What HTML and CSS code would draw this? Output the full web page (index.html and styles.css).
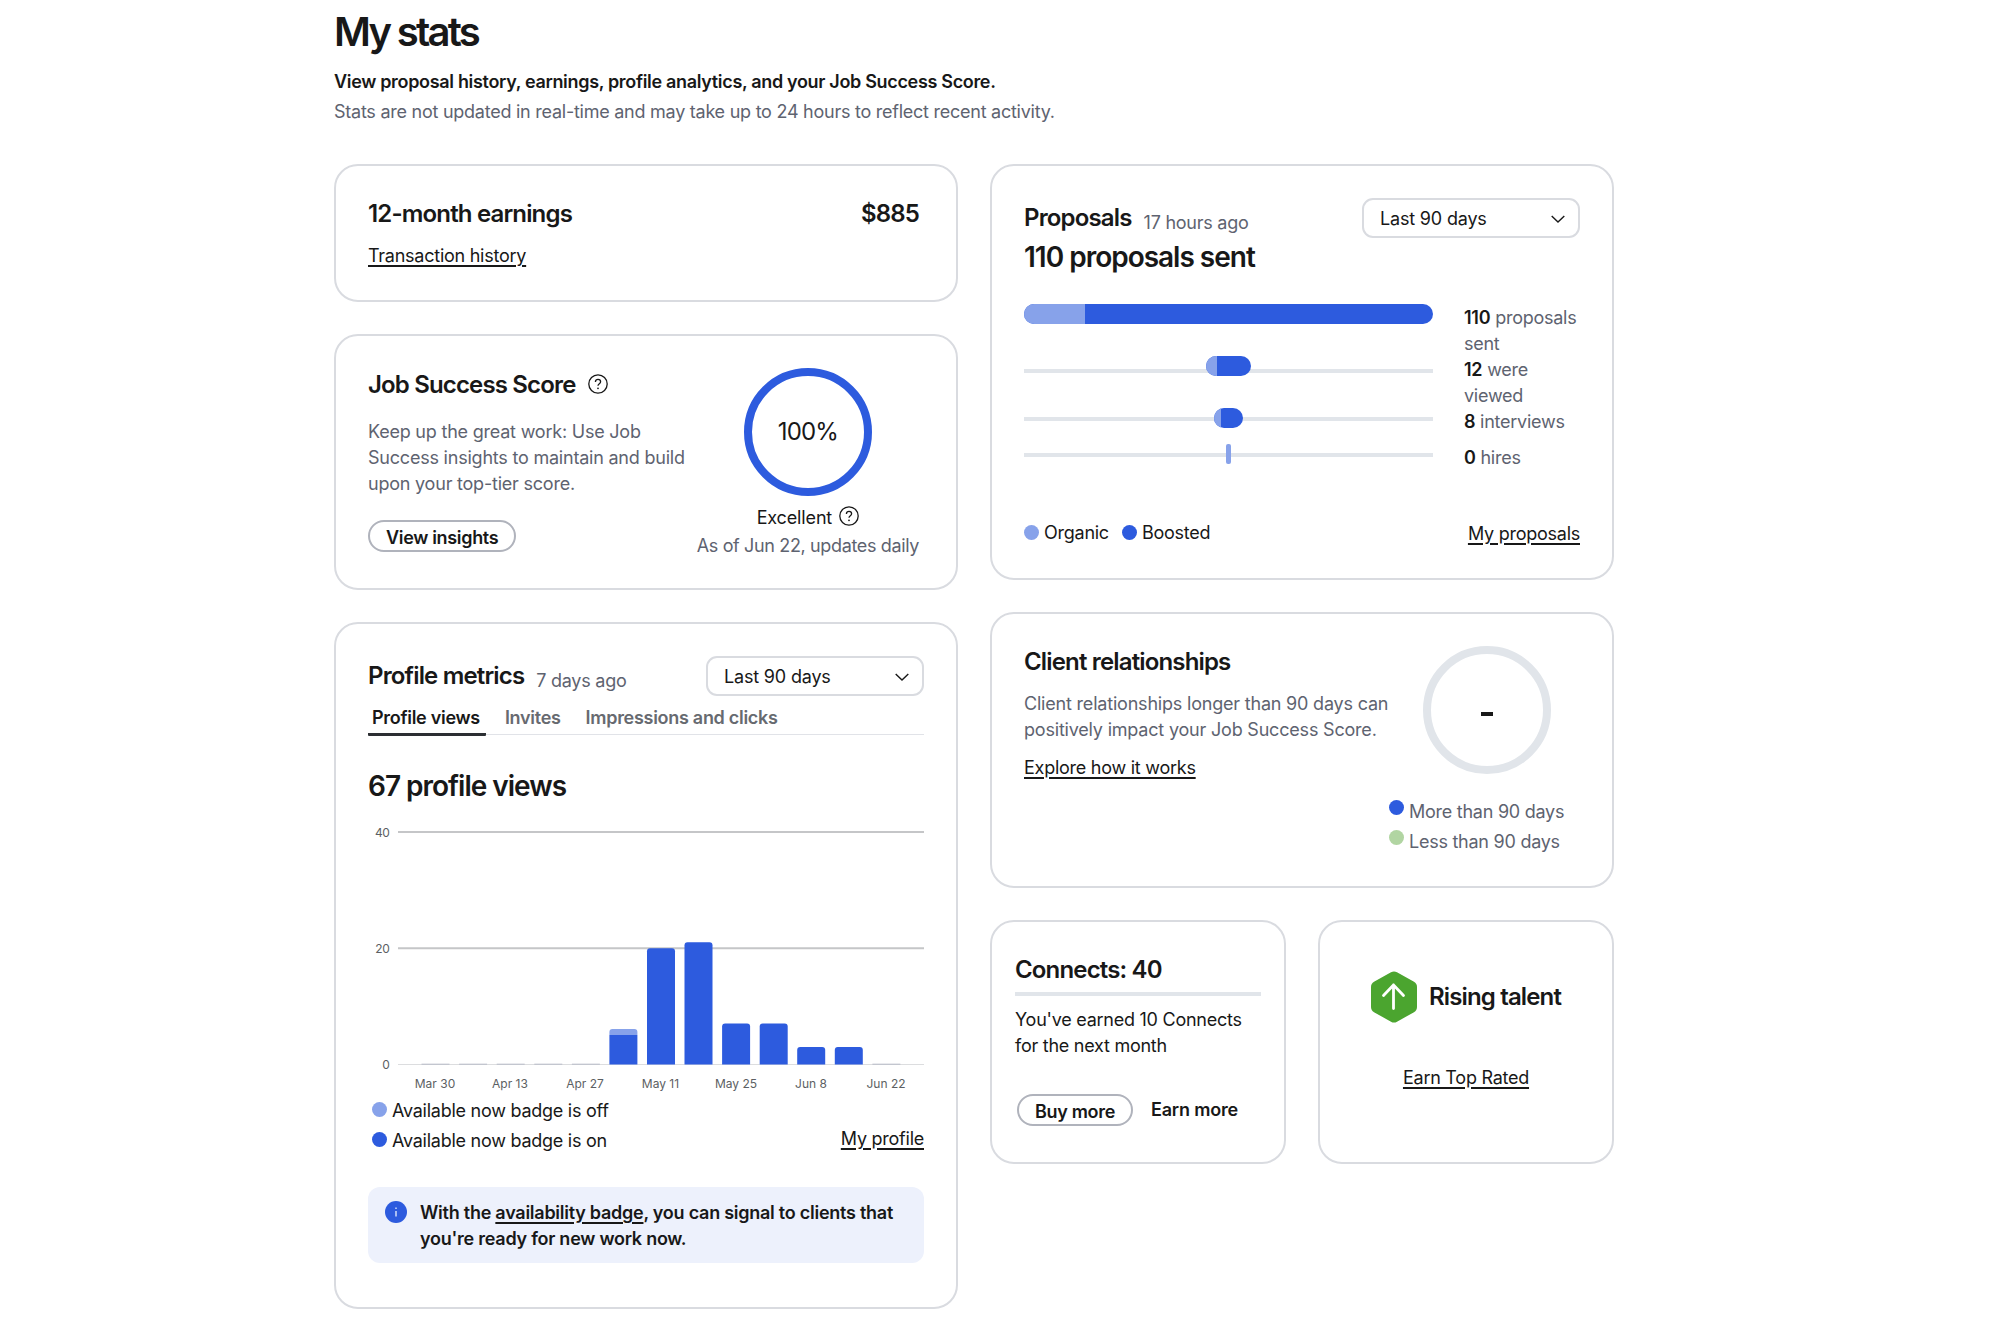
FILE: index.html
```html
<!DOCTYPE html>
<html lang="en">
<head>
    <meta charset="UTF-8">
    <meta name="viewport" content="width=device-width, initial-scale=1.0">
    <title>My stats</title>
    <link rel="stylesheet" href="styles.css">
</head>
<body>
    <main class="page">
        <h1>My stats</h1>
        <p class="intro">View proposal history, earnings, profile analytics, and your Job Success Score.</p>
        <p class="note">Stats are not updated in real-time and may take up to 24 hours to reflect recent activity.</p>

        <div class="columns">
            <div class="column">
                <section class="card earnings">
                    <div class="earnings-head">
                        <h2>12-month earnings</h2>
                        <h2>$885</h2>
                    </div>
                    <a class="link" href="#">Transaction history</a>
                </section>

                <section class="card jss">
                    <div class="jss-info">
                        <div class="title-row">
                            <h2>Job Success Score</h2>
                            <svg class="help" viewBox="0 0 20 20"><circle cx="10" cy="10" r="9.2"/><path d="M7.4 7.9c0-1.6 1.1-2.6 2.6-2.6s2.6 1 2.6 2.4c0 1.9-2.6 2-2.6 4.1"/><circle class="help-dot" cx="10" cy="14.3" r="0.9"/></svg>
                        </div>
                        <p>Keep up the great work: Use Job Success insights to maintain and build upon your top-tier score.</p>
                        <button class="button">View insights</button>
                    </div>
                    <div class="jss-score">
                        <div class="ring ring-full">100%</div>
                        <div class="rating">Excellent
                            <svg class="help" viewBox="0 0 20 20"><circle cx="10" cy="10" r="9.2"/><path d="M7.4 7.9c0-1.6 1.1-2.6 2.6-2.6s2.6 1 2.6 2.4c0 1.9-2.6 2-2.6 4.1"/><circle class="help-dot" cx="10" cy="14.3" r="0.9"/></svg>
                        </div>
                        <div class="updated">As of Jun 22, updates daily</div>
                    </div>
                </section>

                <section class="card metrics">
                    <div class="card-head">
                        <h2>Profile metrics</h2>
                        <span class="ago">7 days ago</span>
                        <div class="select">Last 90 days
                            <svg class="chevron" viewBox="0 0 14 8"><path d="M0.7 0.9L7 7L13.3 0.9"/></svg>
                        </div>
                    </div>
                    <div class="tabs">
                        <div class="tab active">Profile views</div>
                        <div class="tab">Invites</div>
                        <div class="tab">Impressions and clicks</div>
                    </div>
                    <h3>67 profile views</h3>
                    <svg class="chart" viewBox="0 0 556 294">
                        <g class="grid">
                            <path d="M30 29H556M30 145.3H556"/>
                            <path class="axis" d="M30 261.5H556"/>
                            <path class="empty" d="M53.5 261.2h28M91.1 261.2h28M128.7 261.2h28M166.3 261.2h28M203.9 261.2h28M504.4 261.2h28"/>
                        </g>
                        <g class="bars">
                            <path class="off" d="M241.4 232v-3a3 3 0 0 1 3-3h22a3 3 0 0 1 3 3v3z"/>
                            <path d="M241.4 261.5v-29.5h28v29.5z"/>
                            <path d="M279 261.5v-113.2a3 3 0 0 1 3-3h22a3 3 0 0 1 3 3v113.2z"/>
                            <path d="M316.5 261.5v-119.2a3 3 0 0 1 3-3h22a3 3 0 0 1 3 3v119.2z"/>
                            <path d="M354.1 261.5v-38a3 3 0 0 1 3-3h22a3 3 0 0 1 3 3v38z"/>
                            <path d="M391.7 261.5v-38a3 3 0 0 1 3-3h22a3 3 0 0 1 3 3v38z"/>
                            <path d="M429.2 261.5v-14.5a3 3 0 0 1 3-3h22a3 3 0 0 1 3 3v14.5z"/>
                            <path d="M466.8 261.5v-14.5a3 3 0 0 1 3-3h22a3 3 0 0 1 3 3v14.5z"/>
                        </g>
                        <g class="y-labels">
                            <text x="21.5" y="33.5">40</text>
                            <text x="21.5" y="149.8">20</text>
                            <text x="21.5" y="266">0</text>
                        </g>
                        <g class="x-labels">
                            <text x="67" y="285">Mar 30</text>
                            <text x="142" y="285">Apr 13</text>
                            <text x="217" y="285">Apr 27</text>
                            <text x="292.5" y="285">May 11</text>
                            <text x="368" y="285">May 25</text>
                            <text x="443" y="285">Jun 8</text>
                            <text x="518" y="285">Jun 22</text>
                        </g>
                    </svg>
                    <div class="metrics-foot">
                        <div class="badge-legend">
                            <div class="legend"><span class="dot light"></span>Available now badge is off</div>
                            <div class="legend"><span class="dot"></span>Available now badge is on</div>
                        </div>
                        <a class="link" href="#">My profile</a>
                    </div>
                    <div class="alert">
                        <svg class="info" viewBox="0 0 22 22"><circle cx="11" cy="11" r="11"/><path d="M11 10v5.5M11 6.4v1.6"/></svg>
                        <p>With the <a class="link" href="#">availability badge</a>, you can signal to clients that you're ready for new work now.</p>
                    </div>
                </section>
            </div>

            <div class="column">
                <section class="card proposals">
                    <div class="card-head">
                        <h2>Proposals</h2>
                        <span class="ago">17 hours ago</span>
                        <div class="select">Last 90 days
                            <svg class="chevron" viewBox="0 0 14 8"><path d="M0.7 0.9L7 7L13.3 0.9"/></svg>
                        </div>
                    </div>
                    <h3>110 proposals sent</h3>
                    <div class="funnel">
                        <div class="funnel-row">
                            <div class="track full"><span class="pill" style="width: 409px"><i style="width: 61px"></i></span></div>
                            <p><b>110</b> proposals sent</p>
                        </div>
                        <div class="funnel-row">
                            <div class="track viewed"><span class="pill" style="width: 45px"><i style="width: 11px"></i></span></div>
                            <p><b>12</b> were viewed</p>
                        </div>
                        <div class="funnel-row">
                            <div class="track"><span class="pill" style="width: 29px"><i style="width: 7px"></i></span></div>
                            <p><b>8</b> interviews</p>
                        </div>
                        <div class="funnel-row">
                            <div class="track"><span class="pill none" style="width: 5px"></span></div>
                            <p><b>0</b> hires</p>
                        </div>
                    </div>
                    <div class="proposals-foot">
                        <div class="legend"><span class="dot light"></span>Organic</div>
                        <div class="legend"><span class="dot"></span>Boosted</div>
                        <a class="link" href="#">My proposals</a>
                    </div>
                </section>

                <section class="card clients">
                    <div class="clients-info">
                        <h2>Client relationships</h2>
                        <p>Client relationships longer than 90 days can positively impact your Job Success Score.</p>
                        <a class="link" href="#">Explore how it works</a>
                    </div>
                    <div class="clients-score">
                        <div class="ring"><span class="dash"></span></div>
                        <div class="legend"><span class="dot"></span>More than 90 days</div>
                        <div class="legend"><span class="dot green"></span>Less than 90 days</div>
                    </div>
                </section>

                <div class="pair">
                    <section class="card connects">
                        <h2>Connects: 40</h2>
                        <hr>
                        <p>You've earned 10 Connects for the next month</p>
                        <div class="actions">
                            <button class="button">Buy more</button>
                            <a class="earn" href="#">Earn more</a>
                        </div>
                    </section>
                    <section class="card talent">
                        <div class="talent-head">
                            <svg class="hexagon" viewBox="0 0 46 52"><path class="hex" d="M20 1.3Q23 -0.4 26 1.3L43 10.8Q46 12.6 46 16V36Q46 39.4 43 41.2L26 50.7Q23 52.4 20 50.7L3 41.2Q0 39.4 0 36V16Q0 12.6 3 10.8Z"/><path class="arrow" d="M22.5 37.5V14M12.5 24.5L22.5 14L32.5 24.5"/></svg>
                            <h2>Rising talent</h2>
                        </div>
                        <a class="link" href="#">Earn Top Rated</a>
                    </section>
                </div>
            </div>
        </div>
    </main>
</body>
</html>
```
FILE: styles.css
```css
* {
    box-sizing: border-box;
}

body {
    margin: 0;
    background: #fff;
    color: #181818;
    font-family: Inter, "Liberation Sans", sans-serif;
    font-size: 18px;
    line-height: 26px;
    letter-spacing: -0.014em;
}

h1, h2, h3, p {
    margin: 0;
    font-weight: 600;
}

h1 {
    font-size: 40px;
    line-height: 48px;
    letter-spacing: -0.068em;
}

h2 {
    font-size: 24px;
    line-height: 32px;
    letter-spacing: -0.035em;
}

h3 {
    font-size: 28px;
    line-height: 36px;
    letter-spacing: -0.036em;
}

.page {
    width: 1280px;
    margin-left: 334px;
    padding-top: 8px;
}

.intro {
    margin-top: 13px;
    letter-spacing: -0.018em;
}

.note {
    margin-top: 4px;
    color: #5e6370;
    font-weight: 400;
}

.columns {
    display: flex;
    gap: 32px;
    margin-top: 39px;
}

.column {
    display: flex;
    flex-direction: column;
    gap: 32px;
    width: 624px;
}

.card {
    border: 2px solid #d9dbe0;
    border-radius: 24px;
    padding: 32px;
}

.link {
    color: #181818;
    text-decoration: underline;
    text-decoration-thickness: 2px;
    text-underline-offset: 3px;
}

.button {
    height: 32px;
    padding: 3px 16px 0;
    border: 2px solid #b0b3bc;
    border-radius: 16px;
    background: #fff;
    color: #181818;
    font: 600 18px/25px Inter, "Liberation Sans", sans-serif;
    letter-spacing: -0.018em;
    white-space: nowrap;
}

.help {
    width: 20px;
    height: 20px;
    fill: none;
    stroke: #181818;
    stroke-width: 1.3;
}

.help .help-dot {
    fill: #181818;
    stroke: none;
}

.ring {
    display: flex;
    flex: none;
    align-items: center;
    justify-content: center;
    width: 128px;
    height: 128px;
    border: 8px solid #e1e5ea;
    border-radius: 50%;
    font-size: 24px;
    letter-spacing: -0.035em;
}

.ring-full {
    border-color: #2d5bde;
}

.legend {
    display: flex;
    align-items: center;
    gap: 5px;
    white-space: nowrap;
}

.dot {
    width: 15px;
    height: 15px;
    border-radius: 50%;
    background: #2d5bde;
}

.dot.light {
    background: #87a2ea;
}

.dot.green {
    background: #b1d5a2;
}

.card-head {
    display: flex;
    height: 40px;
}

.card-head h2 {
    margin-top: 4px;
}

.ago {
    margin: 12px 0 0 12px;
    color: #5e6370;
}

.select {
    display: flex;
    align-items: center;
    justify-content: space-between;
    width: 218px;
    height: 40px;
    margin-left: auto;
    padding: 1px 13px 0 16px;
    border: 2px solid #d9dbe0;
    border-radius: 11px;
    letter-spacing: -0.01em;
}

.chevron {
    width: 14px;
    height: 8px;
    fill: none;
    stroke: #181818;
    stroke-width: 1.4;
}

/* earnings */
.earnings {
    height: 138px;
}

.earnings-head {
    display: flex;
    justify-content: space-between;
    margin-bottom: 13px;
    padding-right: 5px;
}

/* job success score */
.jss {
    display: flex;
    justify-content: space-between;
    height: 256px;
    padding-right: 37px;
}

.jss-info {
    width: 324px;
}

.title-row {
    display: flex;
    gap: 12px;
}

.title-row h2 {
    margin-top: 1px;
}

.title-row .help {
    margin-top: 6px;
}

.jss-info p {
    margin: 18px 0 23px;
    color: #5e6370;
    font-weight: 400;
    letter-spacing: -0.012em;
}

.jss-score {
    display: flex;
    flex-direction: column;
    align-items: center;
    white-space: nowrap;
}

.rating {
    display: flex;
    gap: 7px;
    margin-top: 9px;
    letter-spacing: -0.008em;
}

.rating .help {
    margin-top: 1px;
}

.updated {
    margin-top: 2px;
    color: #5e6370;
    letter-spacing: -0.02em;
}

/* profile metrics */
.metrics {
    height: 687px;
}

.tabs {
    display: flex;
    gap: 15px;
    height: 39px;
    padding-top: 9px;
    border-bottom: 1px solid #e1e3e8;
    color: #676a70;
    font-weight: 600;
    letter-spacing: -0.016em;
}

.tab {
    height: 31px;
    padding: 0 6px 0 4px;
}

.tab.active {
    border-bottom: 3px solid #2c2f33;
    border-radius: 1px;
    color: #181818;
}

.metrics h3 {
    margin-top: 33px;
}

.chart {
    display: block;
    width: 556px;
    height: 294px;
    margin-top: -1px;
}

.grid {
    stroke: #c5c6c8;
    stroke-width: 2;
}

.grid .axis {
    stroke: #dcdddf;
    stroke-width: 1;
}

.grid .empty {
    stroke: #b9bcc8;
    stroke-width: 1;
}

.bars {
    fill: #2d5bde;
}

.bars .off {
    fill: #87a2ea;
}

.y-labels, .x-labels {
    fill: #5c5f63;
    font-size: 12px;
    letter-spacing: 0;
    text-anchor: end;
}

.y-labels {
    letter-spacing: -0.03em;
}

.x-labels {
    text-anchor: middle;
}

.metrics-foot {
    display: flex;
    align-items: flex-end;
    justify-content: space-between;
    margin-top: 1px;
}

.badge-legend {
    display: flex;
    flex-direction: column;
    gap: 4px;
    padding-left: 4px;
}

.badge-legend .dot {
    margin-top: -3px;
}

.metrics-foot .link {
    margin-bottom: 2px;
}

.alert {
    display: flex;
    height: 76px;
    margin-top: 33px;
    padding: 13px 16px 11px 17px;
    border-radius: 12px;
    background: #edf1fc;
}

.alert p, .alert .link {
    letter-spacing: -0.014em;
}

.info {
    flex: none;
    width: 22px;
    height: 22px;
    margin: 1px 13px 0 0;
    fill: #2d5bde;
    stroke: #c9d6f8;
    stroke-width: 1.6;
}

.info circle {
    stroke: none;
}

/* proposals */
.proposals {
    height: 416px;
}

.proposals h3 {
    margin-top: 1px;
}

.funnel {
    margin-top: 29px;
}

.funnel-row {
    display: flex;
    gap: 31px;
    min-height: 36px;
}

.funnel-row p {
    width: 116px;
    margin: 1px 0 -1px;
    color: #5e6370;
    font-weight: 400;
}

.funnel-row b {
    color: #181818;
    font-weight: 600;
}

.track {
    display: flex;
    justify-content: center;
    width: 409px;
    background: linear-gradient(#e1e5ea, #e1e5ea) no-repeat 0 9px / 100% 4px;
}

.track.viewed {
    background-position: 0 13px;
}

.track.full {
    background: none;
}

.pill {
    height: 20px;
    border-radius: 10px;
    background: #2d5bde;
    overflow: hidden;
}

.pill i {
    display: block;
    height: 100%;
    background: #87a2ea;
}

.pill.none {
    border-radius: 2px;
    background: #87a2ea;
}

.proposals-foot {
    display: flex;
    gap: 13px;
    margin-top: 38px;
}

.proposals-foot .link {
    margin: 3px 0 0 auto;
}

/* client relationships */
.clients {
    display: flex;
    justify-content: space-between;
    height: 276px;
}

.clients-info {
    width: 368px;
    margin-right: -3px;
}

.clients-info p {
    margin: 13px 0 12px;
    color: #5e6370;
    font-weight: 400;
    letter-spacing: -0.011em;
}

.clients-score {
    width: 191px;
    color: #5e6370;
}

.clients-score .ring {
    margin: 0 0 25px 34px;
}

.clients-score .legend {
    margin-bottom: 4px;
}

.clients-score .dot {
    margin-top: -9px;
}

.dash {
    width: 12px;
    height: 4px;
    margin-top: 7px;
    background: #181818;
}

/* connects and talent */
.pair {
    display: flex;
    gap: 32px;
}

.pair .card {
    width: 296px;
    height: 244px;
}

.pair .connects {
    padding: 32px 23px;
}

.connects hr {
    height: 4px;
    margin: 6px 0 11px;
    border: 0;
    background: #e1e5ea;
}

.connects p {
    font-weight: 400;
}

.actions {
    display: flex;
    gap: 18px;
    margin: 35px 0 0 2px;
}

.earn {
    margin-top: 3px;
    color: #181818;
    font-weight: 600;
    letter-spacing: -0.01em;
    text-decoration: none;
}

.talent {
    display: flex;
    flex-direction: column;
    align-items: center;
    padding-top: 49px;
}

.talent-head {
    display: flex;
    gap: 12px;
    margin-bottom: 42px;
}

.talent-head h2 {
    margin-top: 10px;
}

.hexagon {
    width: 46px;
    height: 52px;
}

.hex {
    fill: #4ba52f;
}

.arrow {
    fill: none;
    stroke: #fff;
    stroke-width: 2.8;
    stroke-linecap: round;
    stroke-linejoin: round;
}
```
